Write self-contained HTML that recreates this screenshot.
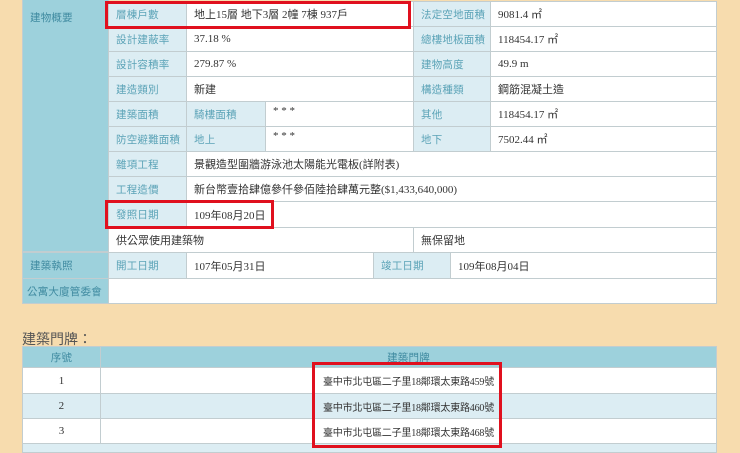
<!DOCTYPE html><html><head><meta charset="utf-8"><style>
body{margin:0;width:740px;height:445px;background:#f7dcae;position:relative;overflow:hidden;font-family:"Liberation Serif","Noto Sans CJK TC",serif;font-size:11px;color:#333}
.c{position:absolute;box-sizing:border-box;border:1px solid #c2cdd0;display:flex;align-items:center;padding-left:7px;background:#fff;white-space:nowrap}
.l{background:#dcedf3;color:#5ba3b7;font-family:"Liberation Sans","Noto Sans CJK TC",sans-serif;font-size:10.5px;letter-spacing:0.2px}
.t{background:#9dd1dc;color:#3f8aa0;font-family:"Liberation Sans","Noto Sans CJK TC",sans-serif;font-size:10.5px;letter-spacing:0.2px}
.a{font-size:10px;letter-spacing:-0.2px}
.r{position:absolute;border:3px solid #e0101e;box-sizing:border-box}
</style></head><body>
<div class="c t" style="left:22px;top:-1px;width:87px;height:253px;align-items:flex-start;padding-top:10px">建物概要</div>
<div class="c l" style="left:108px;top:1px;width:79px;height:26px">層棟戶數</div><div class="c" style="left:186px;top:1px;width:228px;height:26px">地上15層 地下3層 2幢 7棟 937戶</div><div class="c l" style="left:413px;top:1px;width:78px;height:26px">法定空地面積</div><div class="c" style="left:490px;top:1px;width:227px;height:26px">9081.4 ㎡</div>
<div class="c l" style="left:108px;top:26px;width:79px;height:26px">設計建蔽率</div><div class="c" style="left:186px;top:26px;width:228px;height:26px">37.18 %</div><div class="c l" style="left:413px;top:26px;width:78px;height:26px">總樓地板面積</div><div class="c" style="left:490px;top:26px;width:227px;height:26px">118454.17 ㎡</div>
<div class="c l" style="left:108px;top:51px;width:79px;height:26px">設計容積率</div><div class="c" style="left:186px;top:51px;width:228px;height:26px">279.87 %</div><div class="c l" style="left:413px;top:51px;width:78px;height:26px">建物高度</div><div class="c" style="left:490px;top:51px;width:227px;height:26px">49.9 m</div>
<div class="c l" style="left:108px;top:76px;width:79px;height:26px">建造類別</div><div class="c" style="left:186px;top:76px;width:228px;height:26px">新建</div><div class="c l" style="left:413px;top:76px;width:78px;height:26px">構造種類</div><div class="c" style="left:490px;top:76px;width:227px;height:26px">鋼筋混凝土造</div>
<div class="c l" style="left:108px;top:101px;width:79px;height:26px">建築面積</div><div class="c l" style="left:186px;top:101px;width:80px;height:26px">騎樓面積</div><div class="c" style="left:265px;top:101px;width:149px;height:26px;align-items:flex-start;padding-top:3px">* * *</div><div class="c l" style="left:413px;top:101px;width:78px;height:26px">其他</div><div class="c" style="left:490px;top:101px;width:227px;height:26px">118454.17 ㎡</div>
<div class="c l" style="left:108px;top:126px;width:79px;height:26px">防空避難面積</div><div class="c l" style="left:186px;top:126px;width:80px;height:26px">地上</div><div class="c" style="left:265px;top:126px;width:149px;height:26px;align-items:flex-start;padding-top:3px">* * *</div><div class="c l" style="left:413px;top:126px;width:78px;height:26px">地下</div><div class="c" style="left:490px;top:126px;width:227px;height:26px">7502.44 ㎡</div>
<div class="c l" style="left:108px;top:151px;width:79px;height:26px">雜項工程</div><div class="c" style="left:186px;top:151px;width:531px;height:26px">景觀造型圍牆游泳池太陽能光電板(詳附表)</div>
<div class="c l" style="left:108px;top:176px;width:79px;height:26px">工程造價</div><div class="c" style="left:186px;top:176px;width:531px;height:26px">新台幣壹拾肆億參仟參佰陸拾肆萬元整($1,433,640,000)</div>
<div class="c l" style="left:108px;top:201px;width:79px;height:27px">發照日期</div><div class="c" style="left:186px;top:201px;width:531px;height:27px">109年08月20日</div>
<div class="c" style="left:108px;top:227px;width:306px;height:26px">供公眾使用建築物</div><div class="c" style="left:413px;top:227px;width:304px;height:26px">無保留地</div>
<div class="c t" style="left:22px;top:252px;width:87px;height:27px">建築執照</div><div class="c l" style="left:108px;top:252px;width:79px;height:27px">開工日期</div><div class="c" style="left:186px;top:252px;width:188px;height:27px">107年05月31日</div><div class="c l" style="left:373px;top:252px;width:78px;height:27px">竣工日期</div><div class="c" style="left:450px;top:252px;width:267px;height:27px">109年08月04日</div>
<div class="c t" style="left:22px;top:278px;width:87px;height:26px;padding-left:4px">公寓大廈管委會</div><div class="c" style="left:108px;top:278px;width:609px;height:26px"></div>
<div style="position:absolute;left:22px;top:329px;font-size:14px;color:#555;font-family:'Liberation Sans','Noto Sans CJK TC',sans-serif">建築門牌：</div>
<div class="c t" style="left:22px;top:346px;width:79px;height:22px;justify-content:center;padding:0">序號</div><div class="c t" style="left:100px;top:346px;width:617px;height:22px;justify-content:center;padding:0">建築門牌</div>
<div class="c" style="left:22px;top:367px;width:79px;height:27px;justify-content:center;padding:0">1</div><div class="c a" style="left:100px;top:367px;width:617px;height:27px;justify-content:center;padding:0">臺中市北屯區二子里18鄰環太東路459號</div>
<div class="c l" style="left:22px;top:393px;width:79px;height:26px;justify-content:center;padding:0;color:#333;font-family:inherit;font-size:11px">2</div><div class="c l a" style="left:100px;top:393px;width:617px;height:26px;justify-content:center;padding:0;color:#333;font-family:inherit;font-size:10px">臺中市北屯區二子里18鄰環太東路460號</div>
<div class="c" style="left:22px;top:418px;width:79px;height:26px;justify-content:center;padding:0">3</div><div class="c a" style="left:100px;top:418px;width:617px;height:26px;justify-content:center;padding:0">臺中市北屯區二子里18鄰環太東路468號</div>
<div class="c l" style="left:22px;top:443px;width:695px;height:10px"></div>
<div class="r" style="left:105px;top:1px;width:306px;height:28px"></div>
<div class="r" style="left:105px;top:200px;width:169px;height:29px"></div>
<div class="r" style="left:312px;top:362px;width:190px;height:86px"></div>
</body></html>
